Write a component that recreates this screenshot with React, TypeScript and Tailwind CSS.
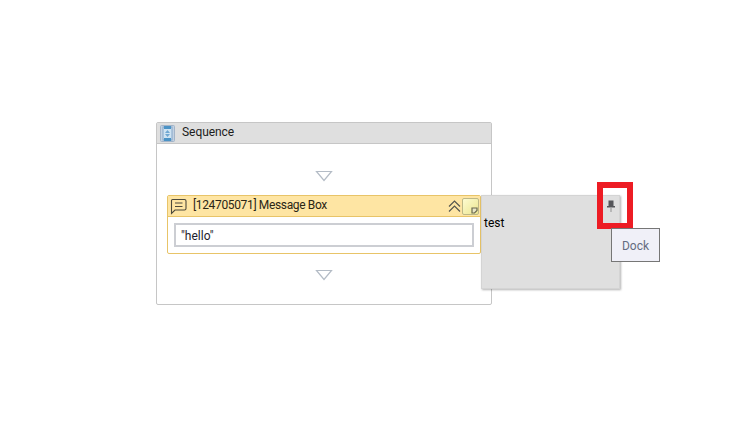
import React from 'react';

function DropArrow() {
  return (
    <svg width="18" height="12" viewBox="0 0 18 12" className="block">
      <path d="M1.5 1.5 H16.5 L9 10.5 Z" fill="#fff" stroke="#b4bcc6" strokeWidth="1.2" />
    </svg>
  );
}

function SequenceIcon() {
  return (
    <svg width="15" height="17" viewBox="0 0 15 17" className="block">
      <rect x="0.5" y="0.5" width="14" height="16" rx="1" fill="#c3d2e3" stroke="#a3b4c8" />
      <rect x="3" y="2" width="9" height="13" fill="#cfe3f2" stroke="#86a6c8" />
      <rect x="4" y="1" width="7" height="3" fill="#4b93c6" />
      <rect x="4" y="13" width="7" height="3" fill="#4b93c6" />
      <path d="M7.5 5 L5 8 H10 Z M7.5 12 L5 9 H10 Z" fill="#6fa7d2" />
    </svg>
  );
}

function MessageIcon() {
  return (
    <svg width="17" height="17" viewBox="0 0 17 17" fill="none" stroke="#4d4a3c" strokeWidth="1.1" className="block">
      <path d="M2.5 1.5 H14.5 A1.5 1.5 0 0 1 16 3 V10.5 A1.5 1.5 0 0 1 14.5 12 H5 L1.5 15.5 V2.5 A1 1 0 0 1 2.5 1.5 Z" />
      <path d="M5 5 H12.5 M5 8.5 H12.5" />
    </svg>
  );
}

function CollapseIcon() {
  return (
    <svg width="13" height="13" viewBox="0 0 13 13" fill="none" stroke="#55564f" strokeWidth="1.2" className="block">
      <path d="M1 6.5 L6.5 1 L12 6.5" />
      <path d="M1 11.5 L6.5 6 L12 11.5" />
    </svg>
  );
}

function NoteIcon() {
  return (
    <div className="relative w-[17px] h-[17px] rounded-[2px] border border-[#bdb887] bg-gradient-to-br from-[#fdfbd0] to-[#ece58f]">
      <svg width="7" height="7" viewBox="0 0 7 7" className="absolute right-0 bottom-0 block">
        <path d="M1 1 H6 V3.5 L3.5 6 H1 Z" fill="#e9e6c4" stroke="#6b6950" strokeWidth="1.2" />
      </svg>
    </div>
  );
}

function PinIcon() {
  return (
    <svg width="10" height="13" viewBox="0 0 10 13" className="block">
      <path d="M2.5 0.5 H7.5 V6 H9 V7.5 H1 V6 H2.5 Z" fill="#55565a" />
      <rect x="4.3" y="7.5" width="1.4" height="4.5" fill="#a5a5a5" />
    </svg>
  );
}

export default function App() {
  return (
    <div className="w-[736px] h-[427px] overflow-hidden bg-white pt-[122px] pl-[156px] font-['Roboto',sans-serif] text-[12px] text-[#1c1c1c]">
      <div className="relative w-[336px] h-[183px] rounded-[2px] border border-[#c6c6c6] bg-white">
        <div className="flex items-center gap-[7px] h-[21px] pl-[3px] bg-[#dfdfdf] border-b border-[#c6c6c6]">
          <SequenceIcon />
          <span className="pb-[2px] tracking-[-0.05px]">Sequence</span>
        </div>

        <div className="flex flex-col items-center pt-[26px]">
          <DropArrow />
        </div>

        <div className="mx-[10px] mt-[13px] w-[314px] h-[59px] rounded-[2px] border border-[#e8c468] bg-white">
          <div className="flex items-center h-[21px] pl-[2px] pr-[1px] bg-[#fee5a3] border-b border-[#e8c468]">
            <MessageIcon />
            <span className="ml-[6px] flex-1 pb-[2px] tracking-[-0.35px] text-[#2b2615]">[124705071] Message Box</span>
            <CollapseIcon />
            <div className="ml-[1px]"><NoteIcon /></div>
          </div>
          <div className="px-[6px] pt-[6px]">
            <div className="h-[24px] border-2 border-[#ccced3] bg-white pl-[5px] leading-[22px] text-[#1c1c2c]">"hello"</div>
          </div>
        </div>

        <div className="flex flex-col items-center pt-[15px]">
          <DropArrow />
        </div>

        {/* note pops out over the sequence border */}
        <div className="absolute left-[324px] top-[72px] w-[139px] h-[94px] bg-[#dfdfdf] border border-[#d4d4d4] shadow-[1px_1px_2px_rgba(0,0,0,0.3)] pl-[2px] pt-[18px] text-black">
          test
          <div className="absolute right-[3px] top-[4px]"><PinIcon /></div>
        </div>

        {/* callout around the pin */}
        <div className="absolute left-[440px] top-[59px] w-[36px] h-[47px] border-[6px] border-[#ed1c24]" />

        <div className="absolute left-[454px] top-[105px] w-[49px] h-[34px] flex items-center justify-center pt-[2px] bg-[#f0f0f8] border border-[#767676] text-[#656c80]">
          Dock
        </div>
      </div>
    </div>
  );
}
